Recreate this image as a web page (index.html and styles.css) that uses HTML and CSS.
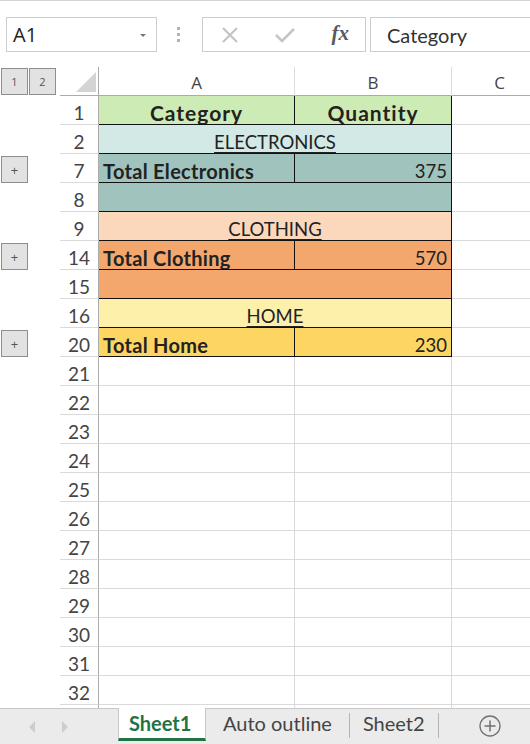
FILE: index.html
```html
<!DOCTYPE html>
<html lang="en">
<head>
  <meta charset="UTF-8" />
  <title>Auto outline</title>
  <link rel="stylesheet" href="styles.css">
</head>
<body>

  <div class="formula-bar">
    <div class="name-box">
      <span>A1</span>
      <span class="drop"></span>
    </div>
    <svg class="grip" width="6" height="16" viewBox="0 0 6 16">
      <rect x="1" y="0" width="3" height="3" fill="#b4b4b4"/>
      <rect x="1" y="6" width="3" height="3" fill="#b4b4b4"/>
      <rect x="1" y="12" width="3" height="3" fill="#b4b4b4"/>
    </svg>
    <div class="fx-buttons">
      <svg width="18" height="18" viewBox="0 0 18 18">
        <path d="M2 2 L16 16 M16 2 L2 16" stroke="#c4c4c4" stroke-width="2.2" fill="none"/>
      </svg>
      <svg width="22" height="18" viewBox="0 0 22 18">
        <path d="M2 9 L8 15 L20 3" stroke="#c4c4c4" stroke-width="2.6" fill="none"/>
      </svg>
      <span class="fx">fx</span>
    </div>
    <div class="formula-input">Category</div>
  </div>

  <div class="sheet">
    <div class="row head">
      <div class="ol">
        <span class="lvl">1</span><span class="lvl">2</span>
      </div>
      <div class="corner">
        <svg width="22" height="21" viewBox="0 0 22 21"><polygon points="21,0 21,20 1,20" fill="#d4d4d4"/></svg>
      </div>
      <div class="colh">A</div>
      <div class="colh">B</div>
      <div class="colh">C</div>
    </div>

    <div class="row">
      <div class="ol"></div><div class="rh">1</div>
      <div class="c tb green title center">Category</div>
      <div class="c tb green title center">Quantity</div>
      <div class="c"></div>
    </div>
    <div class="row">
      <div class="ol"></div><div class="rh">2</div>
      <div class="c tb span2 blue-light center"><u>ELECTRONICS</u></div>
      <div class="c"></div>
    </div>
    <div class="row">
      <div class="ol"><span class="expand">+</span></div><div class="rh">7</div>
      <div class="c tb blue bold">Total Electronics</div>
      <div class="c tb blue right">375</div>
      <div class="c"></div>
    </div>
    <div class="row">
      <div class="ol"></div><div class="rh">8</div>
      <div class="c tb span2 blue"></div>
      <div class="c"></div>
    </div>
    <div class="row">
      <div class="ol"></div><div class="rh">9</div>
      <div class="c tb span2 orange-light center"><u>CLOTHING</u></div>
      <div class="c"></div>
    </div>
    <div class="row">
      <div class="ol"><span class="expand">+</span></div><div class="rh">14</div>
      <div class="c tb orange bold">Total Clothing</div>
      <div class="c tb orange right">570</div>
      <div class="c"></div>
    </div>
    <div class="row">
      <div class="ol"></div><div class="rh">15</div>
      <div class="c tb span2 orange"></div>
      <div class="c"></div>
    </div>
    <div class="row">
      <div class="ol"></div><div class="rh">16</div>
      <div class="c tb span2 gold-light center"><u>HOME</u></div>
      <div class="c"></div>
    </div>
    <div class="row">
      <div class="ol"><span class="expand">+</span></div><div class="rh">20</div>
      <div class="c tb gold bold">Total Home</div>
      <div class="c tb gold right">230</div>
      <div class="c"></div>
    </div>

    <div class="row"><div class="ol"></div><div class="rh">21</div><div class="c"></div><div class="c"></div><div class="c"></div></div>
    <div class="row"><div class="ol"></div><div class="rh">22</div><div class="c"></div><div class="c"></div><div class="c"></div></div>
    <div class="row"><div class="ol"></div><div class="rh">23</div><div class="c"></div><div class="c"></div><div class="c"></div></div>
    <div class="row"><div class="ol"></div><div class="rh">24</div><div class="c"></div><div class="c"></div><div class="c"></div></div>
    <div class="row"><div class="ol"></div><div class="rh">25</div><div class="c"></div><div class="c"></div><div class="c"></div></div>
    <div class="row"><div class="ol"></div><div class="rh">26</div><div class="c"></div><div class="c"></div><div class="c"></div></div>
    <div class="row"><div class="ol"></div><div class="rh">27</div><div class="c"></div><div class="c"></div><div class="c"></div></div>
    <div class="row"><div class="ol"></div><div class="rh">28</div><div class="c"></div><div class="c"></div><div class="c"></div></div>
    <div class="row"><div class="ol"></div><div class="rh">29</div><div class="c"></div><div class="c"></div><div class="c"></div></div>
    <div class="row"><div class="ol"></div><div class="rh">30</div><div class="c"></div><div class="c"></div><div class="c"></div></div>
    <div class="row"><div class="ol"></div><div class="rh">31</div><div class="c"></div><div class="c"></div><div class="c"></div></div>
    <div class="row"><div class="ol"></div><div class="rh">32</div><div class="c"></div><div class="c"></div><div class="c"></div></div>
    <div class="row"><div class="ol"></div><div class="rh"></div><div class="c"></div><div class="c"></div><div class="c"></div></div>
  </div>

  <div class="tab-bar">
    <div class="tab-nav">
      <svg width="8" height="12" viewBox="0 0 8 12"><polygon points="7,0 7,12 1,6" fill="#cdcdcd"/></svg>
      <svg width="8" height="12" viewBox="0 0 8 12"><polygon points="1,0 1,12 7,6" fill="#cdcdcd"/></svg>
    </div>
    <div class="tab active">Sheet1</div>
    <div class="tab">Auto outline</div>
    <div class="tab sep">Sheet2</div>
    <div class="tab-add">
      <svg width="22" height="22" viewBox="0 0 22 22">
        <circle cx="11" cy="11" r="10" stroke="#707070" stroke-width="1.3" fill="none"/>
        <path d="M11 5.5 V16.5 M5.5 11 H16.5" stroke="#707070" stroke-width="1.5"/>
      </svg>
    </div>
  </div>

</body>
</html>
```

FILE: styles.css
```css
* {
  box-sizing: border-box;
}

body {
  margin: 0;
  width: 530px;
  height: 744px;
  overflow: hidden;
  background: #fff;
  font-family: Lato, "Open Sans", sans-serif;
  color: #222;
  display: flex;
  flex-direction: column;
}

/* formula bar */
.formula-bar {
  height: 67px;
  flex: none;
  border-top: 1px solid #d4d4d4;
  display: flex;
  align-items: flex-start;
  padding-top: 16px;
  padding-left: 6px;
}

.name-box {
  width: 151px;
  height: 35px;
  border: 1px solid #cdcdcd;
  display: flex;
  align-items: center;
  justify-content: space-between;
  padding: 0 10px 0 6px;
  font-family: "Open Sans", sans-serif;
  font-size: 20px;
  color: #222;
}

.drop {
  width: 0;
  height: 0;
  border-left: 3px solid transparent;
  border-right: 3px solid transparent;
  border-top: 3px solid #777;
  margin-top: 2px;
}

.grip {
  margin: 10px 20px 0 19px;
}

.fx-buttons {
  width: 164px;
  height: 35px;
  border: 1px solid #cdcdcd;
  display: flex;
  align-items: center;
  justify-content: space-between;
  padding: 0 16px 0 18px;
}

.fx {
  font-family: "Liberation Serif", serif;
  font-style: italic;
  font-weight: bold;
  font-size: 21px;
  color: #5a5a5a;
  margin-top: -3px;
}

.formula-input {
  flex: 1;
  height: 35px;
  margin-left: 4px;
  border: 1px solid #cdcdcd;
  border-right: none;
  padding-left: 16px;
  display: flex;
  align-items: center;
  font-size: 20px;
  color: #333;
}

/* grid */
.sheet {
  flex: 1;
  overflow: hidden;
}

.row {
  display: grid;
  grid-template-columns: 60px 39px 196px 157px 96px;
  height: 29px;
}

.row > div {
  border-right: 1px solid #dadada;
  border-bottom: 1px solid #dadada;
}

.row > .ol {
  border: none;
  display: flex;
  align-items: center;
  padding-left: 1px;
}

.lvl,
.expand {
  width: 27px;
  height: 27px;
  border: 1px solid #8e8e8e;
  background: #e2e2e2;
  display: flex;
  align-items: center;
  justify-content: center;
  font-family: "Open Sans", sans-serif;
  color: #555;
}

.lvl {
  font-size: 11px;
  margin-right: 1px;
}

.expand {
  font-size: 13px;
  margin-top: 2px;
}

.head > .corner {
  border-right: 1px solid #ababab;
  border-bottom: 1px solid #ababab;
  display: flex;
  align-items: flex-end;
  justify-content: flex-end;
  padding: 0 1px 2px 0;
}

.head > .colh {
  border-right: 1px solid #dcdcdc;
  border-bottom: 1px solid #ababab;
  text-align: center;
  font-family: "Open Sans", sans-serif;
  font-size: 17px;
  line-height: 32px;
  color: #444;
  overflow: hidden;
}

.row > .rh {
  border-right: 1px solid #ababab;
  text-align: center;
  font-size: 19px;
  line-height: 34px;
  color: #444;
  overflow: hidden;
}

.c {
  font-size: 18.5px;
  line-height: 34px;
  padding: 0 4px;
  white-space: nowrap;
  overflow: hidden;
}

.row > .tb {
  border-right: 1px solid #111;
  border-bottom: 1px solid #111;
}

.span2 {
  grid-column: span 2;
}

.bold {
  font-weight: bold;
  font-size: 20px;
  letter-spacing: 0.3px;
}

.title {
  font-weight: bold;
  font-size: 21px;
  letter-spacing: 1px;
}

.center {
  text-align: center;
}

.right {
  text-align: right;
}

.center u {
  text-underline-offset: 3px;
}

.green { background: #cdebb5; }
.blue-light { background: #d3e9e6; }
.blue { background: #a0c4bd; }
.orange-light { background: #fbd7bc; }
.orange { background: #f4a76d; }
.gold-light { background: #fcf0ab; }
.gold { background: #fcd562; }

/* sheet tabs */
.tab-bar {
  height: 36px;
  flex: none;
  background: #ebebeb;
  border-top: 1px solid #c8c8c8;
  display: flex;
  align-items: stretch;
}

.tab-nav {
  width: 118px;
  display: flex;
  align-items: center;
  gap: 25px;
  padding-left: 28px;
}

.tab {
  font-size: 20px;
  color: #444;
  display: flex;
  align-items: center;
  padding: 0 17px 5px;
  margin: 4px 0 6px;
}

.tab.active {
  background: #fff;
  color: #217346;
  font-weight: bold;
  margin: -1px 0 3px;
  padding: 0 0 0 10px;
  border-left: 1px solid #c8c8c8;
  border-right: 1px solid #c8c8c8;
  border-bottom: 3px solid #217346;
  width: 88px;
}

.tab.sep {
  border-left: 1px solid #b4b4b4;
  border-right: 1px solid #b4b4b4;
  padding: 0 13px 5px;
}

.tab-add {
  display: flex;
  align-items: center;
  padding: 0 0 2px 40px;
}
```
